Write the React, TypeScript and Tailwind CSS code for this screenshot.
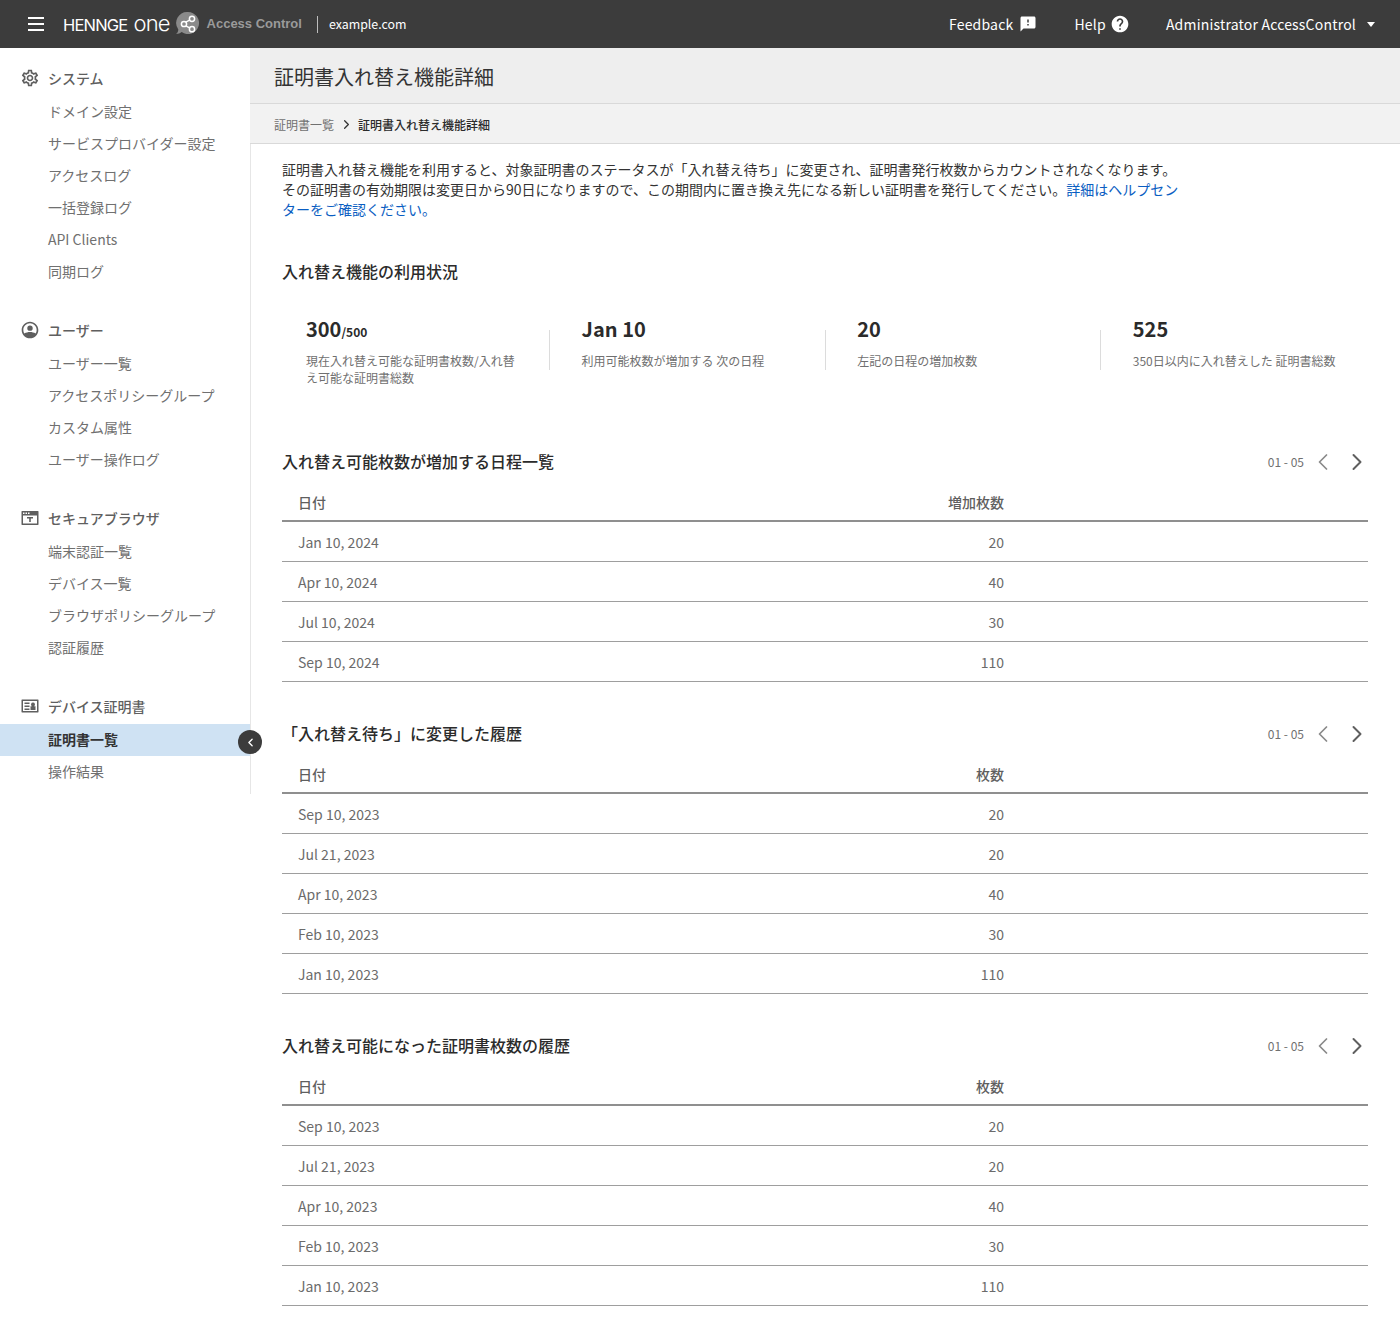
import { ChevronLeft, ChevronRight } from "lucide-react";

const gearPath =
  "M19.43 12.98c.04-.32.07-.64.07-.98 0-.34-.03-.66-.07-.98l2.11-1.65c.19-.15.24-.42.12-.64l-2-3.46c-.09-.16-.26-.25-.44-.25-.06 0-.12.01-.17.03l-2.49 1c-.52-.4-1.08-.73-1.69-.98l-.38-2.65C14.46 2.18 14.25 2 14 2h-4c-.25 0-.46.18-.49.42l-.38 2.65c-.61.25-1.17.59-1.69.98l-2.49-1c-.06-.02-.12-.03-.18-.03-.17 0-.34.09-.43.25l-2 3.46c-.13.22-.07.49.12.64l2.11 1.65c-.04.32-.07.65-.07.98 0 .33.03.66.07.98l-2.11 1.65c-.19.15-.24.42-.12.64l2 3.46c.09.16.26.25.44.25.06 0 .12-.01.17-.03l2.49-1c.52.4 1.08.73 1.69.98l.38 2.65c.03.24.24.42.49.42h4c.25 0 .46-.18.49-.42l.38-2.65c.61-.25 1.17-.59 1.69-.98l2.49 1c.06.02.12.03.18.03.17 0 .34-.09.43-.25l2-3.46c.12-.22.07-.49-.12-.64l-2.11-1.65zm-1.98-1.71c.04.31.05.52.05.73 0 .21-.02.43-.05.73l-.14 1.13.89.7 1.08.84-.7 1.21-1.27-.51-1.04-.42-.9.68c-.43.32-.84.56-1.25.73l-1.06.43-.16 1.13-.2 1.35h-1.4l-.19-1.35-.16-1.13-1.06-.43c-.43-.18-.83-.41-1.23-.71l-.91-.7-1.06.43-1.27.51-.7-1.21 1.08-.84.89-.7-.14-1.13c-.03-.31-.05-.54-.05-.74s.02-.43.05-.73l.14-1.13-.89-.7-1.08-.84.7-1.21 1.27.51 1.04.42.9-.68c.43-.32.84-.56 1.25-.73l1.06-.43.16-1.13.2-1.35h1.39l.19 1.35.16 1.13 1.06.43c.43.18.83.41 1.23.71l.91.7 1.06-.43 1.27-.51.7 1.21-1.07.85-.89.7.14 1.13zM12 8c-2.21 0-4 1.79-4 4s1.79 4 4 4 4-1.79 4-4-1.79-4-4-4zm0 6c-1.1 0-2-.9-2-2s.9-2 2-2 2 .9 2 2-.9 2-2 2z";

function GearIcon() {
  return (
    <svg viewBox="0 0 24 24" className="size-5 fill-[#5f5f5f]">
      <path d={gearPath} />
    </svg>
  );
}

function UserIcon() {
  return (
    <svg viewBox="0 0 24 24" className="size-5 fill-[#5f5f5f]">
      <path d="M12 2C6.480 2 2 6.480 2 12s4.480 10 10 10 10-4.480 10-10S17.520 2 12 2zm0 2c4.410 0 8 3.590 8 8 0 1.600-.470 3.090-1.280 4.340C16.900 15.100 14.400 14.500 12 14.500s-4.900.600-6.720 1.840A7.960 7.960 0 0 1 4 12c0-4.410 3.590-8 8-8zm0 2.500a3.250 3.250 0 1 0 0 6.500 3.250 3.250 0 0 0 0-6.500z" />
    </svg>
  );
}

function BrowserIcon() {
  return (
    <svg viewBox="0 0 20 20" className="size-5 fill-[#5f5f5f]">
      <path
        fillRule="evenodd"
        d="M2 3h16c.3 0 .5.2.5.5v13c0 .3-.2.5-.5.500H2c-.3 0-.5-.2-.5-.5v-13c0-.3.2-.5.5-.5zm1 4.500v8h14v-8H3zM3 4.500v1.500h1.500V4.500H3zm2.500 0v1.500H7V4.500H5.500zm2.500 0v1.500h1.500V4.500H8zM7 9h6v1.500h-2.200V14H9.200v-3.500H7V9z"
      />
    </svg>
  );
}

function CertIcon() {
  return (
    <svg viewBox="0 0 20 20" className="size-5 fill-[#5f5f5f]">
      <path
        fillRule="evenodd"
        d="M2 3.500h16c.3 0 .5.2.5.5v12c0 .3-.2.5-.5.500H2c-.3 0-.5-.2-.5-.5V4c0-.3.2-.5.5-.5zM3 5v10h14V5H3zm1.500 1.500h5V8h-5V6.500zm0 3h5V11h-5V9.500zm0 3h5V14h-5v-1.500zM13 6.500a2 2 0 0 1 1 3.730h1.500V14h-5v-3.770h1.500A2 2 0 0 1 13 6.500z"
      />
    </svg>
  );
}

function LogoMark() {
  return (
    <svg viewBox="0 0 24 26" className="h-[26px] w-6">
      <path d="M13 1a11 11 0 1 1-6.300 20c-1.400 1.200-3.400 2-5.700 2 1.300-1 2.200-2.700 2.300-4.600A11 11 0 0 1 13 1z" fill="#8a8a8a" />
      <path d="M15.500 8.700 10.400 11.300M10.400 14.700l5.100 2.700" fill="none" stroke="#fff" strokeWidth="1.500" />
      <circle cx="17" cy="7.800" r="2.600" fill="#8a8a8a" stroke="#fff" strokeWidth="1.500" />
      <circle cx="9" cy="13" r="2.600" fill="#8a8a8a" stroke="#fff" strokeWidth="1.500" />
      <circle cx="17" cy="18.200" r="2.600" fill="#8a8a8a" stroke="#fff" strokeWidth="1.500" />
    </svg>
  );
}

const navGroups = [
  {
    title: "システム",
    icon: <GearIcon />,
    items: ["ドメイン設定", "サービスプロバイダー設定", "アクセスログ", "一括登録ログ", "API Clients", "同期ログ"],
  },
  {
    title: "ユーザー",
    icon: <UserIcon />,
    items: ["ユーザー一覧", "アクセスポリシーグループ", "カスタム属性", "ユーザー操作ログ"],
  },
  {
    title: "セキュアブラウザ",
    icon: <BrowserIcon />,
    items: ["端末認証一覧", "デバイス一覧", "ブラウザポリシーグループ", "認証履歴"],
  },
  {
    title: "デバイス証明書",
    icon: <CertIcon />,
    items: ["証明書一覧", "操作結果"],
  },
];

const stats = [
  { value: "300", sub: "/500", label: "現在入れ替え可能な証明書枚数/入れ替え可能な証明書総数" },
  { value: "Jan 10", label: "利用可能枚数が増加する 次の日程" },
  { value: "20", label: "左記の日程の増加枚数" },
  { value: "525", label: "350日以内に入れ替えした 証明書総数" },
];

const history = [
  ["Sep 10, 2023", "20"],
  ["Jul 21, 2023", "20"],
  ["Apr 10, 2023", "40"],
  ["Feb 10, 2023", "30"],
  ["Jan 10, 2023", "110"],
];

const tables = [
  {
    title: "入れ替え可能枚数が増加する日程一覧",
    column: "増加枚数",
    rows: [
      ["Jan 10, 2024", "20"],
      ["Apr 10, 2024", "40"],
      ["Jul 10, 2024", "30"],
      ["Sep 10, 2024", "110"],
    ],
  },
  { title: "「入れ替え待ち」に変更した履歴", column: "枚数", rows: history },
  { title: "入れ替え可能になった証明書枚数の履歴", column: "枚数", rows: history },
];

function Header() {
  return (
    <header className="flex h-12 items-center bg-[#3c3c3c] text-white">
      <button className="ml-7 flex w-4 flex-col gap-1">
        <span className="h-0.5 w-4 bg-white" />
        <span className="h-0.5 w-4 bg-white" />
        <span className="h-0.5 w-4 bg-white" />
      </button>
      <span className="ml-[19px] -mt-0.5 flex items-baseline font-['Inter',sans-serif] leading-none">
        <span className="text-[16.500px] tracking-[-0.800px]">HENNGE</span>
        <span className="ml-[6px] text-[22px] font-light tracking-[-0.900px]">one</span>
      </span>
      <span className="ml-[5px]"><LogoMark /></span>
      <span className="ml-[8px] font-['Liberation_Sans',sans-serif] text-[13px] font-bold text-[#9a9a9a]">Access Control</span>
      <span className="ml-[15px] h-[17px] w-px bg-[#bdbdbd]" />
      <span className="ml-[11px] text-[12.400px]">example.com</span>
      <div className="ml-auto flex items-center text-sm tracking-[0.200px]">
        <span>Feedback</span>
        <svg viewBox="0 0 24 24" className="ml-1.5 size-[18px] fill-white">
          <path d="M20 2H4c-1.100 0-1.990.900-1.990 2L2 22l4-4h14c1.100 0 2-.900 2-2V4c0-1.100-.900-2-2-2zm-7 12h-2v-2h2v2zm0-4h-2V6h2v4z" />
        </svg>
        <span className="ml-[37px]">Help</span>
        <svg viewBox="0 0 24 24" className="ml-1 size-5 fill-white">
          <path d="M12 2C6.480 2 2 6.480 2 12s4.480 10 10 10 10-4.480 10-10S17.520 2 12 2zm1 17h-2v-2h2v2zm2.070-7.750l-.900.920C13.450 12.900 13 13.500 13 15h-2v-.500c0-1.100.450-2.100 1.170-2.830l1.240-1.260c.370-.360.590-.860.590-1.410 0-1.100-.900-2-2-2s-2 .900-2 2H8c0-2.210 1.790-4 4-4s4 1.790 4 4c0 .880-.360 1.680-.930 2.250z" />
        </svg>
        <span className="ml-[36px]">Administrator AccessControl</span>
        <span className="mr-[25px] ml-[11px] h-0 w-0 border-x-[4px] border-t-[5px] border-x-transparent border-t-white" />
      </div>
    </header>
  );
}

function Sidebar() {
  return (
    <aside className="relative -mr-px h-[746px] w-[251px] shrink-0 border-r border-[#e6e6e6] pt-3 text-sm">
      {navGroups.map((group) => (
        <div key={group.title} className="mb-6 last:mb-0">
          <div className="flex h-9 items-center gap-2 pl-5 font-medium text-[#5f5f5f]">
            {group.icon}
            <span>{group.title}</span>
          </div>
          {group.items.map((item) => {
            const active = item === "証明書一覧";
            return (
              <div
                key={item}
                className={
                  active
                    ? "flex h-8 items-center bg-[#cfe2f3] pb-0.5 pl-12 font-bold text-[#333333]"
                    : "flex h-8 items-center pb-0.5 pl-12 text-[#707070]"
                }
              >
                {item}
              </div>
            );
          })}
        </div>
      ))}
      <button className="absolute top-[682px] -right-3 z-20 flex size-6 items-center justify-center rounded-full bg-[#3c3c3c] text-white">
        <ChevronLeft size={13} strokeWidth={2.5} />
      </button>
    </aside>
  );
}

function Stat({ value, sub, label }: { value: string; sub?: string; label: string }) {
  return (
    <div className="w-[243px] shrink-0">
      <div className="text-xl leading-8 font-bold text-[#2b2b2b]">
        {value}
        {sub && <span className="text-xs font-bold">{sub}</span>}
      </div>
      <p className="mt-[7px] w-[212px] text-xs leading-[17px] text-[#707070]">{label}</p>
    </div>
  );
}

function DataTable({ title, column, rows }: { title: string; column: string; rows: string[][] }) {
  return (
    <section className="mt-[29px]">
      <div className="flex h-[45px] items-center">
        <h2 className="pb-0.5 text-base font-medium text-[#2b2b2b]">{title}</h2>
        <span className="ml-auto text-xs text-[#707070]">01 - 05</span>
        <ChevronLeft size={28} strokeWidth={1.500} className="ml-[5px] text-[#8a8a8a]" />
        <ChevronRight size={28} strokeWidth={1.700} className="-mr-[3px] ml-1.5 text-[#5f5f5f]" />
      </div>
      <div className="flex h-[38px] items-center border-b-2 border-[#8f8f8f] text-sm font-medium text-[#5f5f5f]">
        <span className="pl-4 whitespace-nowrap">日付</span>
        <span className="mr-[364px] ml-auto whitespace-nowrap">{column}</span>
      </div>
      {rows.map(([date, count]) => (
        <div key={date} className="flex h-10 items-center border-b border-[#9e9e9e] text-sm text-[#6b6b6b]">
          <span className="pl-4">{date}</span>
          <span className="mr-[364px] ml-auto">{count}</span>
        </div>
      ))}
    </section>
  );
}

export default function App() {
  return (
    <div className="min-h-[1322px] bg-white font-['Noto_Sans_CJK_JP','Noto_Sans',sans-serif]">
      <Header />
      <div className="flex">
        <Sidebar />
        <main className="relative min-w-0 flex-1">
          <div className="flex h-14 items-center border-b border-[#d9d9d9] bg-[#eeeeee] pt-0.5 pl-6 text-xl text-[#333333]">
            証明書入れ替え機能詳細
          </div>
          <div className="flex h-10 items-center border-b border-[#d9d9d9] bg-[#f2f2f2] pt-0.5 pl-6 text-xs">
            <span className="text-[#707070]">証明書一覧</span>
            <ChevronRight size={15} strokeWidth={2} className="mr-1 ml-[5px] text-[#333333]" />
            <span className="font-medium text-[#2b2b2b]">証明書入れ替え機能詳細</span>
          </div>
          <div className="px-[32px] pt-[15px] pb-4">
            <p className="w-[900px] text-sm leading-5 text-[#333333]">
              証明書入れ替え機能を利用すると、対象証明書のステータスが「入れ替え待ち」に変更され、証明書発行枚数からカウントされなくなります。
              <br />
              その証明書の有効期限は変更日から90日になりますので、この期間内に置き換え先になる新しい証明書を発行してください。
              <a href="#" className="text-[#0a5ec2]">詳細はヘルプセンターをご確認ください。</a>
            </p>
            <h2 className="mt-[40px] text-base leading-6 font-medium text-[#2b2b2b]">入れ替え機能の利用状況</h2>
            <div className="mt-[30px] flex h-[97px] pl-6">
              {stats.map((stat, i) => (
                <div key={stat.value} className={i < 3 ? "flex w-[275.600px] shrink-0" : "flex shrink-0"}>
                  <Stat {...stat} />
                  {i < 3 && <span className="mt-[17px] h-10 w-px shrink-0 bg-[#dcdcdc]" />}
                </div>
              ))}
            </div>
            <DataTable {...tables[0]} />
            <DataTable {...tables[1]} />
            <DataTable {...tables[2]} />
          </div>
        </main>
      </div>
    </div>
  );
}
